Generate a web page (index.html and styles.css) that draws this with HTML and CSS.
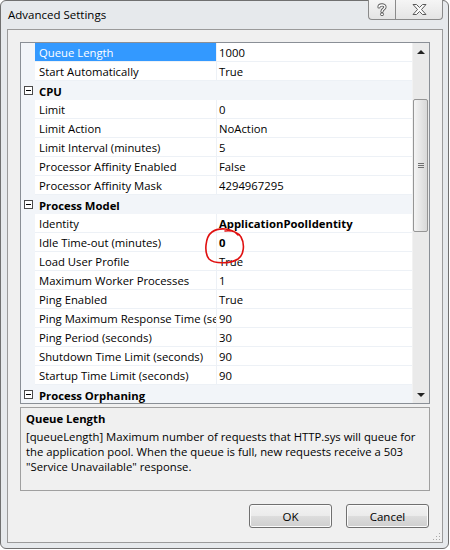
FILE: index.html
```html
<!DOCTYPE html>
<html>
<head>
<meta charset="utf-8">
<link rel="stylesheet" href="styles.css">
</head>
<body>
<div class="window">
  <div class="titlebar">
    <span class="title">Advanced Settings</span>
    <div class="tbtns">
      <div class="tbtn help">
        <svg width="10" height="13" viewBox="0 0 10 13"><path d="M2 4 C2 1.5 8 1 8 4 C8 6 5 6 5 8.5" fill="none" stroke="#5a5a5a" stroke-width="3.2" stroke-linecap="round"/><path d="M2 4 C2 1.5 8 1 8 4 C8 6 5 6 5 8.5" fill="none" stroke="#fff" stroke-width="1.4" stroke-linecap="round"/><circle cx="5" cy="11.3" r="1.5" fill="#fff" stroke="#5a5a5a" stroke-width="1"/></svg>
      </div>
      <div class="tbtn close">
        <svg width="15" height="11" viewBox="0 0 15 11"><polygon points="1,0.5 4.5,0.5 7.5,3.5 10.5,0.5 14,0.5 9.5,5.5 14,10.5 10.5,10.5 7.5,7.5 4.5,10.5 1,10.5 5.5,5.5" fill="#fbfbfb" stroke="#5a5a5a" stroke-width="1" stroke-linejoin="round"/></svg>
      </div>
    </div>
  </div>
  <div class="client">
    <div class="grid">
      <div class="rows">
        <div class="row sel"><div class="m"></div><div class="n">Queue Length</div><div class="v">1000</div></div>
        <div class="row"><div class="m"></div><div class="n">Start Automatically</div><div class="v">True</div></div>
        <div class="row cat"><div class="m"><span class="tog"></span></div><div class="c">CPU</div></div>
        <div class="row"><div class="m"></div><div class="n">Limit</div><div class="v">0</div></div>
        <div class="row"><div class="m"></div><div class="n">Limit Action</div><div class="v">NoAction</div></div>
        <div class="row"><div class="m"></div><div class="n">Limit Interval (minutes)</div><div class="v">5</div></div>
        <div class="row"><div class="m"></div><div class="n">Processor Affinity Enabled</div><div class="v">False</div></div>
        <div class="row"><div class="m"></div><div class="n">Processor Affinity Mask</div><div class="v">4294967295</div></div>
        <div class="row cat"><div class="m"><span class="tog"></span></div><div class="c">Process Model</div></div>
        <div class="row"><div class="m"></div><div class="n">Identity</div><div class="v b">ApplicationPoolIdentity</div></div>
        <div class="row"><div class="m"></div><div class="n">Idle Time-out (minutes)</div><div class="v b">0</div></div>
        <div class="row"><div class="m"></div><div class="n">Load User Profile</div><div class="v">True</div></div>
        <div class="row"><div class="m"></div><div class="n">Maximum Worker Processes</div><div class="v">1</div></div>
        <div class="row"><div class="m"></div><div class="n">Ping Enabled</div><div class="v">True</div></div>
        <div class="row"><div class="m"></div><div class="n">Ping Maximum Response Time (seconds)</div><div class="v">90</div></div>
        <div class="row"><div class="m"></div><div class="n">Ping Period (seconds)</div><div class="v">30</div></div>
        <div class="row"><div class="m"></div><div class="n">Shutdown Time Limit (seconds)</div><div class="v">90</div></div>
        <div class="row"><div class="m"></div><div class="n">Startup Time Limit (seconds)</div><div class="v">90</div></div>
        <div class="row cat"><div class="m"><span class="tog"></span></div><div class="c">Process Orphaning</div></div>
      </div>
      <div class="sb">
        <div class="arrow"><span class="up"></span></div>
        <div class="track">
          <div class="thumb"><span class="grip"></span></div>
        </div>
        <div class="arrow"><span class="down"></span></div>
      </div>
    </div>
    <div class="desc">
      <div class="dtitle">Queue Length</div>
      <div class="dtext">[queueLength] Maximum number of requests that HTTP.sys will queue for<br>the application pool. When the queue is full, new requests receive a 503<br>"Service Unavailable" response.</div>
    </div>
    <div class="actions">
      <button class="btn">OK</button>
      <button class="btn">Cancel</button>
    </div>
    <svg class="grip-corner" width="8" height="8" viewBox="0 0 8 8">
      <rect x="6" y="0" width="1" height="1" fill="#a8a8a8"/>
      <rect x="3" y="3" width="1" height="1" fill="#a8a8a8"/>
      <rect x="6" y="3" width="1" height="1" fill="#a8a8a8"/>
      <rect x="0" y="6" width="1" height="1" fill="#a8a8a8"/>
      <rect x="3" y="6" width="1" height="1" fill="#a8a8a8"/>
      <rect x="6" y="6" width="1" height="1" fill="#a8a8a8"/>
    </svg>
  </div>
  <svg class="mark" width="46" height="42" viewBox="0 0 46 42"><path d="M36 9 C30 2 17 1 10 6 C3 11 2 27 7 33 C12 38 28 38 36 33 C42 29 43 18 39 11 C37 7 31 4 23 5" fill="none" stroke="#e01010" stroke-width="1.6" stroke-linecap="round"/></svg>
</div>
</body>
</html>
```
FILE: styles.css
```css
* { box-sizing: border-box; }
body {
  margin: 0;
  background: #ffffff;
  font-family: "Open Sans", "Noto Sans", sans-serif;
  font-size: 11.3px;
  color: #000;
}
.window {
  position: relative;
  width: 449px;
  height: 549px;
  border: 1px solid #707070;
  border-radius: 6px;
  background: #e6e9ec;
  display: flex;
  flex-direction: column;
}
.titlebar {
  height: 28px;
  display: flex;
  align-items: center;
  padding: 0 5px 0 7px;
}
.title {
  font-size: 11.5px;
  line-height: 16px;
  margin-top: -1px;
  color: #000;
}
.tbtns {
  margin-left: auto;
  align-self: flex-start;
  margin-top: -1px;
  display: flex;
}
.tbtn {
  height: 20px;
  border: 1px solid #8a8a8a;
  border-top: none;
  background: linear-gradient(#f5f5f5, #e4e4e4);
  display: flex;
  align-items: center;
  justify-content: center;
}
.help {
  width: 27px;
  border-right: none;
  border-radius: 0 0 0 4px;
}
.close {
  width: 48px;
  border-radius: 0 0 4px 0;
}
.client {
  position: relative;
  margin: 0 5px 0 6px;
  height: 514px;
  border: 1px solid #9a9a9a;
  background: #f0f0f0;
  padding: 12px;
  display: flex;
  flex-direction: column;
}
.grid {
  height: 362px;
  border: 1px solid #8a8f96;
  background: #fff;
  display: flex;
}
.rows {
  flex: 1;
  overflow: hidden;
}
.row {
  display: flex;
  height: 19px;
  line-height: 20px;
  white-space: nowrap;
}
.m {
  width: 14px;
  flex: none;
  background: #f2f5f9;
  display: flex;
  align-items: center;
  padding-left: 3px;
}
.n {
  width: 182px;
  flex: none;
  overflow: hidden;
  padding-left: 4px;
  border-right: 1px solid #edf1f6;
  border-bottom: 1px solid #edf1f6;
}
.v {
  flex: 1;
  overflow: hidden;
  padding-left: 2px;
  border-bottom: 1px solid #edf1f6;
}
.b { font-weight: bold; }
.sel .n {
  background: #3399ff;
  color: #fff;
}
.cat { background: #f2f5f9; line-height: 21px; }
.c {
  flex: 1;
  font-weight: bold;
  padding-left: 4px;
  overflow: hidden;
}
.tog {
  width: 9px;
  height: 9px;
  border: 1px solid #4a4a4a;
  background: #fff;
  position: relative;
  display: block;
}
.tog::after {
  content: "";
  position: absolute;
  left: 1px;
  top: 3px;
  width: 5px;
  height: 1px;
  background: #000;
}
.sb {
  width: 17px;
  flex: none;
  background: #eaeaea;
  border-left: 1px solid #f2f2f2;
  display: flex;
  flex-direction: column;
}
.arrow {
  height: 17px;
  display: flex;
  align-items: center;
  justify-content: center;
}
.up {
  width: 0;
  height: 0;
  border-left: 4px solid transparent;
  border-right: 4px solid transparent;
  border-bottom: 4px solid #222;
}
.down {
  width: 0;
  height: 0;
  border-left: 4px solid transparent;
  border-right: 4px solid transparent;
  border-top: 4px solid #222;
}
.track {
  flex: 1;
  padding-top: 39px;
}
.thumb {
  height: 133px;
  margin: 0 1px 0 0;
  border: 1px solid #959595;
  border-radius: 2px;
  background: linear-gradient(to right, #f4f4f4, #e6e6e6 50%, #d8d8d8);
  display: flex;
  align-items: center;
  justify-content: center;
}
.grip {
  width: 6px;
  height: 5px;
  border-top: 1px solid #707070;
  border-bottom: 1px solid #707070;
  position: relative;
}
.grip::after {
  content: "";
  position: absolute;
  left: 0;
  right: 0;
  top: 1px;
  height: 1px;
  background: #707070;
}
.desc {
  margin-top: 3px;
  height: 84px;
  border: 1px solid #a0a0a0;
  padding: 3px 5px;
  line-height: 15px;
  white-space: nowrap;
  overflow: hidden;
}
.dtitle {
  font-weight: bold;
  margin-bottom: 3px;
}
.actions {
  margin-top: 13px;
  display: flex;
  justify-content: flex-end;
  gap: 14px;
  padding-right: 1px;
}
.btn {
  width: 83px;
  height: 24px;
  border: 1px solid #707070;
  border-radius: 3px;
  background: linear-gradient(#f2f2f2 0%, #ebebeb 50%, #dddddd 50%, #cfcfcf 100%);
  box-shadow: inset 0 0 0 1px #fbfbfb;
  font-family: inherit;
  font-size: 11.5px;
  color: #000;
  padding: 0;
}
.grip-corner {
  position: absolute;
  right: 1px;
  bottom: 1px;
}
.mark {
  position: absolute;
  left: 201px;
  top: 225px;
  pointer-events: none;
}
```
